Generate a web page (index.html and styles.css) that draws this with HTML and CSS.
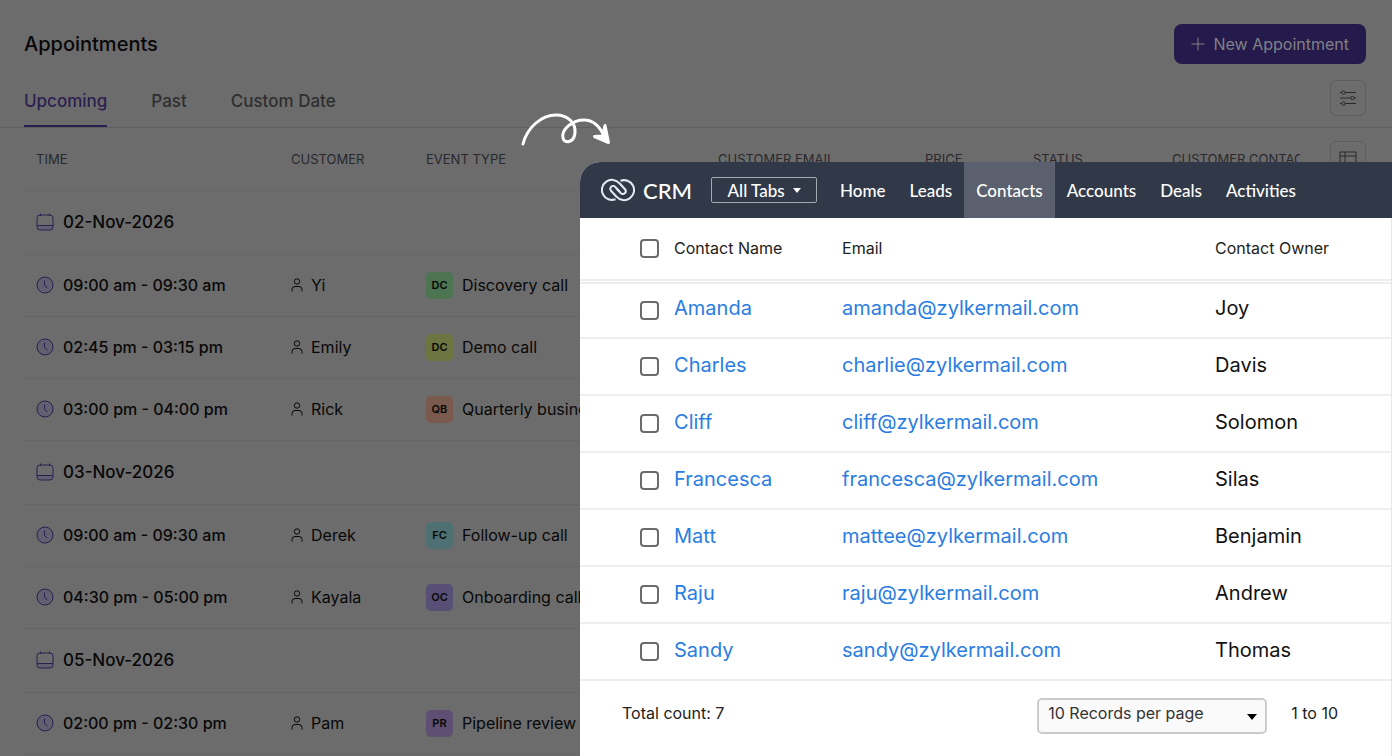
FILE: index.html
```html
<!DOCTYPE html>
<html lang="en">
<head>
    <meta charset="UTF-8">
    <meta name="viewport" content="width=device-width, initial-scale=1.0">
    <title>Appointments</title>
    <link rel="stylesheet" href="styles.css">
</head>
<body>
    <!-- shared icons -->
    <svg class="sprite" aria-hidden="true">
        <symbol id="calendar" viewBox="0 0 18 18">
            <path class="fill" d="M1 12.500h16v1.500a3 3 0 0 1-3 3H4a3 3 0 0 1-3-3z"/>
            <rect x="1" y="2" width="16" height="15" rx="3"/>
            <path d="M1 12.500h16M4.500 .5v2.500M13.500 .5v2.500"/>
        </symbol>
        <symbol id="clock" viewBox="0 0 18 18">
            <circle class="fill" cx="9" cy="9" r="8"/>
            <circle cx="9" cy="9" r="8"/>
            <path d="M8.500 4.500v5l3 2.500"/>
        </symbol>
        <symbol id="person" viewBox="0 0 12 14">
            <circle cx="6" cy="3.500" r="2.700"/>
            <path d="M1 13.500v-2a3 3 0 0 1 3-3h4a3 3 0 0 1 3 3v2"/>
        </symbol>
    </svg>

    <main class="page">
        <header class="page-header">
            <h1>Appointments</h1>
            <button class="new-btn" type="button">
                <svg width="14" height="14" viewBox="0 0 14 14"><path d="M7 .5v13M.5 7h13"/></svg>
                New Appointment
            </button>
        </header>

        <div class="tab-bar">
            <nav class="tabs">
                <a class="tab active" href="#upcoming">Upcoming</a>
                <a class="tab" href="#past">Past</a>
                <a class="tab" href="#custom">Custom Date</a>
            </nav>
            <button class="icon-btn" type="button" aria-label="Filter">
                <svg width="18" height="16" viewBox="0 0 18 16">
                    <path d="M1 2.500h2M6 2.500h11M1 8h10.500M15.500 8H17M1 13.500h2M6 13.500h11"/>
                    <circle cx="4.500" cy="2.500" r="1.700"/><circle cx="13.500" cy="8" r="1.700"/><circle cx="4.500" cy="13.500" r="1.700"/>
                </svg>
            </button>
        </div>

        <table class="appointments">
            <colgroup>
                <col class="c-time"><col class="c-customer"><col class="c-event"><col class="c-email"><col class="c-price"><col class="c-status"><col class="c-contact"><col>
            </colgroup>
            <thead>
                <tr>
                    <th>TIME</th>
                    <th>CUSTOMER</th>
                    <th>EVENT TYPE</th>
                    <th>CUSTOMER EMAIL</th>
                    <th>PRICE</th>
                    <th>STATUS</th>
                    <th>CUSTOMER CONTACT</th>
                    <th class="columns">
                        <button class="icon-btn" type="button" aria-label="Columns">
                            <svg width="18" height="16" viewBox="0 0 18 16"><path d="M1 1h16v14H1zM1 5h16M6 1v14"/></svg>
                        </button>
                    </th>
                </tr>
            </thead>
            <tbody>
                <tr class="date">
                    <td colspan="8"><div class="cell"><svg class="mark"><use href="#calendar"/></svg>02-Nov-2026</div></td>
                </tr>
                <tr>
                    <td class="time"><div class="cell"><svg class="mark"><use href="#clock"/></svg>09:00 am - 09:30 am</div></td>
                    <td><div class="cell"><svg class="person"><use href="#person"/></svg>Yi</div></td>
                    <td colspan="6"><div class="cell"><span class="badge green">DC</span>Discovery call</div></td>
                </tr>
                <tr>
                    <td class="time"><div class="cell"><svg class="mark"><use href="#clock"/></svg>02:45 pm - 03:15 pm</div></td>
                    <td><div class="cell"><svg class="person"><use href="#person"/></svg>Emily</div></td>
                    <td colspan="6"><div class="cell"><span class="badge lime">DC</span>Demo call</div></td>
                </tr>
                <tr>
                    <td class="time"><div class="cell"><svg class="mark"><use href="#clock"/></svg>03:00 pm - 04:00 pm</div></td>
                    <td><div class="cell"><svg class="person"><use href="#person"/></svg>Rick</div></td>
                    <td colspan="6"><div class="cell"><span class="badge orange">QB</span>Quarterly business</div></td>
                </tr>
                <tr class="date">
                    <td colspan="8"><div class="cell"><svg class="mark"><use href="#calendar"/></svg>03-Nov-2026</div></td>
                </tr>
                <tr>
                    <td class="time"><div class="cell"><svg class="mark"><use href="#clock"/></svg>09:00 am - 09:30 am</div></td>
                    <td><div class="cell"><svg class="person"><use href="#person"/></svg>Derek</div></td>
                    <td colspan="6"><div class="cell"><span class="badge teal">FC</span>Follow-up call</div></td>
                </tr>
                <tr>
                    <td class="time"><div class="cell"><svg class="mark"><use href="#clock"/></svg>04:30 pm - 05:00 pm</div></td>
                    <td><div class="cell"><svg class="person"><use href="#person"/></svg>Kayala</div></td>
                    <td colspan="6"><div class="cell"><span class="badge violet">OC</span>Onboarding call</div></td>
                </tr>
                <tr class="date">
                    <td colspan="8"><div class="cell"><svg class="mark"><use href="#calendar"/></svg>05-Nov-2026</div></td>
                </tr>
                <tr>
                    <td class="time"><div class="cell"><svg class="mark"><use href="#clock"/></svg>02:00 pm - 02:30 pm</div></td>
                    <td><div class="cell"><svg class="person"><use href="#person"/></svg>Pam</div></td>
                    <td colspan="6"><div class="cell"><span class="badge purple">PR</span>Pipeline review</div></td>
                </tr>
            </tbody>
        </table>
    </main>

    <svg class="arrow" width="92" height="36" viewBox="0 0 92 36" aria-hidden="true">
        <path d="M2 32C6 16 20 3 35 3c12 0 20 8 19 18-1 10-11 11-12 5-2-9 10-18 21-18 10 0 16 7 20 16"/>
        <path class="head" d="M73.500 24.500l14 6-3.500-17-2.500 10.500z"/>
    </svg>

    <section class="crm">
        <header class="crm-bar">
            <div class="brand">
                <svg width="34" height="24" viewBox="0 0 34 24">
                    <path d="M14.500 21.200A10 10 0 1 1 18.500 5.300L24 11.300a2.800 2.800 0 0 1-4.200 3.800L15 10"/>
                    <path d="M19.500 2.800A10 10 0 1 1 15.500 18.700L10 12.700a2.800 2.800 0 0 1 4.200-3.800L19 14"/>
                </svg>
                CRM
            </div>
            <button class="all-tabs" type="button">All Tabs
                <svg width="8" height="5" viewBox="0 0 8 5"><path d="M0 0h8L4 5z"/></svg>
            </button>
            <nav class="crm-nav">
                <a href="#home">Home</a>
                <a href="#leads">Leads</a>
                <a class="active" href="#contacts">Contacts</a>
                <a href="#accounts">Accounts</a>
                <a href="#deals">Deals</a>
                <a href="#activities">Activities</a>
            </nav>
        </header>

        <div class="crm-body">
            <table class="contacts">
                <colgroup><col class="c-check"><col class="c-name"><col class="c-mail"><col></colgroup>
                <thead>
                    <tr>
                        <th><input type="checkbox" aria-label="Select all"></th>
                        <th>Contact Name</th>
                        <th>Email</th>
                        <th>Contact Owner</th>
                    </tr>
                </thead>
                <tbody>
                    <tr>
                        <td><input type="checkbox" aria-label="Select Amanda"></td>
                        <td><a href="#amanda">Amanda</a></td>
                        <td><a href="mailto:amanda@zylkermail.com">amanda@zylkermail.com</a></td>
                        <td>Joy</td>
                    </tr>
                    <tr>
                        <td><input type="checkbox" aria-label="Select Charles"></td>
                        <td><a href="#charles">Charles</a></td>
                        <td><a href="mailto:charlie@zylkermail.com">charlie@zylkermail.com</a></td>
                        <td>Davis</td>
                    </tr>
                    <tr>
                        <td><input type="checkbox" aria-label="Select Cliff"></td>
                        <td><a href="#cliff">Cliff</a></td>
                        <td><a href="mailto:cliff@zylkermail.com">cliff@zylkermail.com</a></td>
                        <td>Solomon</td>
                    </tr>
                    <tr>
                        <td><input type="checkbox" aria-label="Select Francesca"></td>
                        <td><a href="#francesca">Francesca</a></td>
                        <td><a href="mailto:francesca@zylkermail.com">francesca@zylkermail.com</a></td>
                        <td>Silas</td>
                    </tr>
                    <tr>
                        <td><input type="checkbox" aria-label="Select Matt"></td>
                        <td><a href="#matt">Matt</a></td>
                        <td><a href="mailto:mattee@zylkermail.com">mattee@zylkermail.com</a></td>
                        <td>Benjamin</td>
                    </tr>
                    <tr>
                        <td><input type="checkbox" aria-label="Select Raju"></td>
                        <td><a href="#raju">Raju</a></td>
                        <td><a href="mailto:raju@zylkermail.com">raju@zylkermail.com</a></td>
                        <td>Andrew</td>
                    </tr>
                    <tr>
                        <td><input type="checkbox" aria-label="Select Sandy"></td>
                        <td><a href="#sandy">Sandy</a></td>
                        <td><a href="mailto:sandy@zylkermail.com">sandy@zylkermail.com</a></td>
                        <td>Thomas</td>
                    </tr>
                </tbody>
            </table>

            <footer class="crm-footer">
                <span class="total">Total count: 7</span>
                <div class="per-page">
                    <select aria-label="Records per page">
                        <option>10 Records per page</option>
                    </select>
                </div>
                <span>1 to 10</span>
            </footer>
        </div>
    </section>
</body>
</html>
```

FILE: styles.css
```css
* {
    box-sizing: border-box;
}
body {
    margin: 0;
    height: 100vh;
    overflow: hidden;
    position: relative;
    background: #6c6c6c;
    color: #080808;
    font-family: Inter, "Liberation Sans", sans-serif;
    font-size: 16px;
}
a {
    color: inherit;
    text-decoration: none;
}
button {
    font: inherit;
    cursor: pointer;
}
svg {
    fill: none;
    stroke: currentColor;
    flex: none;
}
.sprite {
    display: none;
}

/* appointments page */
.page-header {
    display: flex;
    align-items: center;
    justify-content: space-between;
    padding: 24px 26px 0 24px;
}
.page-header h1 {
    margin: 0;
    font-size: 20px;
    font-weight: 500;
}
.new-btn {
    display: flex;
    align-items: center;
    gap: 8px;
    height: 40px;
    padding: 0 17px;
    border: none;
    border-radius: 8px;
    background: #241a4b;
    color: #818087;
}
.tab-bar {
    display: flex;
    align-items: center;
    justify-content: space-between;
    height: 64px;
    padding: 4px 26px 0 24px;
    border-bottom: 1px solid #5f5f61;
}
.tabs {
    display: flex;
    align-self: stretch;
    gap: 44px;
}
.tab {
    display: flex;
    align-items: center;
    padding-top: 8px;
    font-weight: 500;
    font-size: 17px;
    color: #2f2f31;
    border-bottom: 2px solid transparent;
}
.tab.active {
    color: #2b2050;
    border-bottom-color: #2b2050;
}
.icon-btn {
    display: flex;
    align-items: center;
    justify-content: center;
    width: 36px;
    height: 36px;
    padding: 0;
    border: 1px solid #5e5e62;
    border-radius: 6px;
    background: none;
    color: #29292c;
}
.appointments {
    width: calc(100% - 50px);
    margin-left: 24px;
    table-layout: fixed;
    border-collapse: collapse;
}
.c-time { width: 267px; }
.c-customer { width: 135px; }
.c-event { width: 292px; }
.c-email { width: 207px; }
.c-price { width: 108px; }
.c-status { width: 139px; }
.c-contact { width: 128px; }
.appointments th,
.appointments td {
    height: 62px;
    padding: 0;
    text-align: left;
    border-bottom: 1px solid #666667;
}
.appointments th {
    overflow: hidden;
    white-space: nowrap;
    font-size: 13px;
    font-weight: 400;
    color: #29292c;
}
.appointments th:first-child,
.appointments td:first-child {
    padding-left: 12px;
}
.appointments .date td {
    height: 64px;
    font-size: 17px;
    font-weight: 500;
}
.columns .icon-btn {
    margin-left: auto;
}
.cell {
    display: flex;
    align-items: center;
    gap: 9px;
    white-space: nowrap;
}
.time {
    font-weight: 500;
}
.mark {
    width: 18px;
    height: 18px;
    color: #2b2050;
}
.fill {
    fill: #625f70;
    stroke: none;
}
.person {
    width: 12px;
    height: 14px;
    margin-right: -1px;
}
.badge {
    width: 27px;
    height: 27px;
    border-radius: 5px;
    line-height: 27px;
    text-align: center;
    font-size: 11px;
    font-weight: 600;
}
.green { background: #4d7551; }
.lime { background: #6c7440; }
.orange { background: #7a5a4d; }
.teal { background: #4f7072; }
.violet { background: #574f76; }
.purple { background: #5f4f72; }

/* arrow from the page to the CRM window */
.arrow {
    position: absolute;
    top: 112px;
    left: 521px;
    color: #fff;
    stroke-width: 3;
    stroke-linecap: round;
    stroke-linejoin: round;
}
.head {
    fill: #fff;
}

/* CRM window */
.crm {
    position: absolute;
    top: 162px;
    right: 0;
    bottom: 0;
    left: 41.670%;
    display: flex;
    flex-direction: column;
    overflow: hidden;
    border-top-left-radius: 20px;
    background: #fff;
}
.crm-bar {
    display: flex;
    align-items: center;
    height: 56px;
    padding-left: 21px;
    background: #313949;
    color: #fff;
    font-family: Lato, sans-serif;
    font-size: 17px;
    font-weight: 500;
}
.brand {
    display: flex;
    align-items: center;
    gap: 8px;
    margin-right: 19px;
    font-size: 22px;
}
.brand svg {
    stroke-width: 2;
    color: #e4e8f2;
}
.all-tabs {
    display: flex;
    align-items: center;
    justify-content: center;
    gap: 8px;
    width: 106px;
    height: 26px;
    margin-right: 11px;
    padding: 0;
    border: 1px solid #a5a9b1;
    border-radius: 2px;
    background: none;
    color: #fff;
}
.all-tabs svg {
    fill: #fff;
    stroke: none;
}
.crm-nav {
    display: flex;
    align-self: stretch;
}
.crm-nav a {
    display: flex;
    align-items: center;
    padding: 0 12px;
}
.crm-nav .active {
    background: #5a606d;
}
.crm-body {
    flex: 1;
    border-right: 1px solid #e6e6e6;
}
.contacts {
    width: 100%;
    table-layout: fixed;
    border-collapse: collapse;
}
.c-check { width: 94px; }
.c-name { width: 168px; }
.c-mail { width: 373px; }
.contacts th {
    height: 63px;
    padding: 0;
    text-align: left;
    font-weight: 400;
    color: #222;
    border-bottom: 5px double #eee;
}
.contacts td {
    height: 57px;
    padding: 0 0 4px;
    font-size: 20px;
    color: #111;
    border-bottom: 2px solid #eee;
}
.contacts td:first-child {
    padding: 0;
}
.contacts td a {
    color: #2a7de1;
}
.contacts input {
    appearance: none;
    display: block;
    width: 19px;
    height: 19px;
    margin: 0 0 0 60px;
    border: 2px solid #6b6b6b;
    border-radius: 4px;
    background: #fff;
}
.crm-footer {
    display: flex;
    align-items: center;
    height: 70px;
    padding: 0 53px 0 42px;
    color: #222;
}
.crm-footer span {
    padding-bottom: 7px;
}
.total {
    margin-right: auto;
}
.per-page {
    position: relative;
    margin-right: 24px;
}
.per-page select {
    appearance: none;
    width: 230px;
    height: 36px;
    padding: 0 9px 6px;
    border: 2px solid #ccc;
    border-radius: 5px;
    background: #fafafa;
    color: #333;
    font: inherit;
}
.per-page::after {
    content: "";
    position: absolute;
    right: 10px;
    top: 16px;
    border: 5px solid transparent;
    border-top: 6px solid #000;
    border-bottom: none;
}
```
